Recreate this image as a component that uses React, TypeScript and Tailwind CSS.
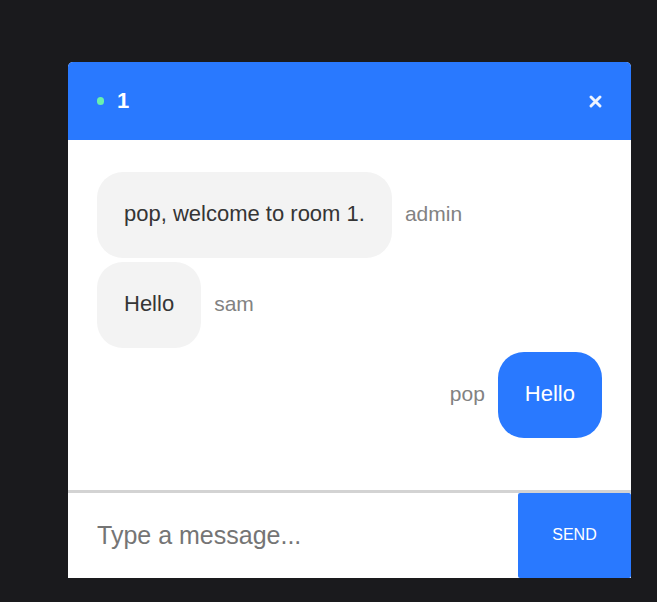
import { useState } from "react";

type Message = { user: string; text: string; own?: boolean };

const messages: Message[] = [
  { user: "admin", text: "pop, welcome to room 1." },
  { user: "sam", text: "Hello" },
  { user: "pop", text: "Hello", own: true },
];

function MessageRow({ user, text, own }: Message) {
  return (
    <li className={`flex items-center gap-[13px] ${own ? "flex-row-reverse" : ""}`}>
      <p
        className={`flex h-[86px] items-center rounded-[26px] px-[27px] pb-0.5 text-[22px] leading-7 ${
          own ? "bg-[#2979ff] text-white" : "bg-[#f3f3f3] text-[#353535]"
        }`}
      >
        {text}
      </p>
      <span className="pb-0.5 text-[21px] leading-6 text-[#828282]">{user}</span>
    </li>
  );
}

export default function App() {
  const [draft, setDraft] = useState("");

  return (
    <main className="min-h-screen bg-[#1a1a1d] pt-[62px] pr-[26px] pb-6 pl-[68px] font-['Liberation_Sans',Arial,sans-serif]">
      <section className="flex flex-col overflow-hidden rounded-t-[5px] bg-white">
        <header className="flex h-[78px] items-center justify-between bg-[#2979ff] px-[29px] text-white">
          <div className="flex items-center gap-[13px]">
            <span className="h-2 w-[7px] rounded-full bg-[#69f0ae]" />
            <h1 className="text-[22px] leading-7 font-bold">1</h1>
          </div>
          <button type="button" aria-label="Close" className="flex">
            <svg viewBox="0 0 13 13" className="size-[13px]" fill="none" stroke="#eef4ff" strokeWidth="2.9" strokeLinecap="round">
              <path d="M2 2L11 11M11 2L2 11" />
            </svg>
          </button>
        </header>
        <ul className="flex flex-col gap-1 px-[29px] pt-8 pb-[52px]">
          {messages.map((message) => (
            <MessageRow key={message.user} {...message} />
          ))}
        </ul>
        <form className="flex border-t-[3px] border-[#d3d3d3]" onSubmit={(event) => event.preventDefault()}>
          <input
            type="text"
            aria-label="Message"
            placeholder="Type a message..."
            value={draft}
            onChange={(event) => setDraft(event.target.value)}
            className="min-w-0 flex-1 px-[29px] text-[25px] text-[#353535] outline-none placeholder:text-[#757575]"
          />
          <button type="submit" className="h-[85px] w-[113px] rounded-xs bg-[#2979ff] pb-0.5 text-base font-light text-white">
            SEND
          </button>
        </form>
      </section>
    </main>
  );
}
